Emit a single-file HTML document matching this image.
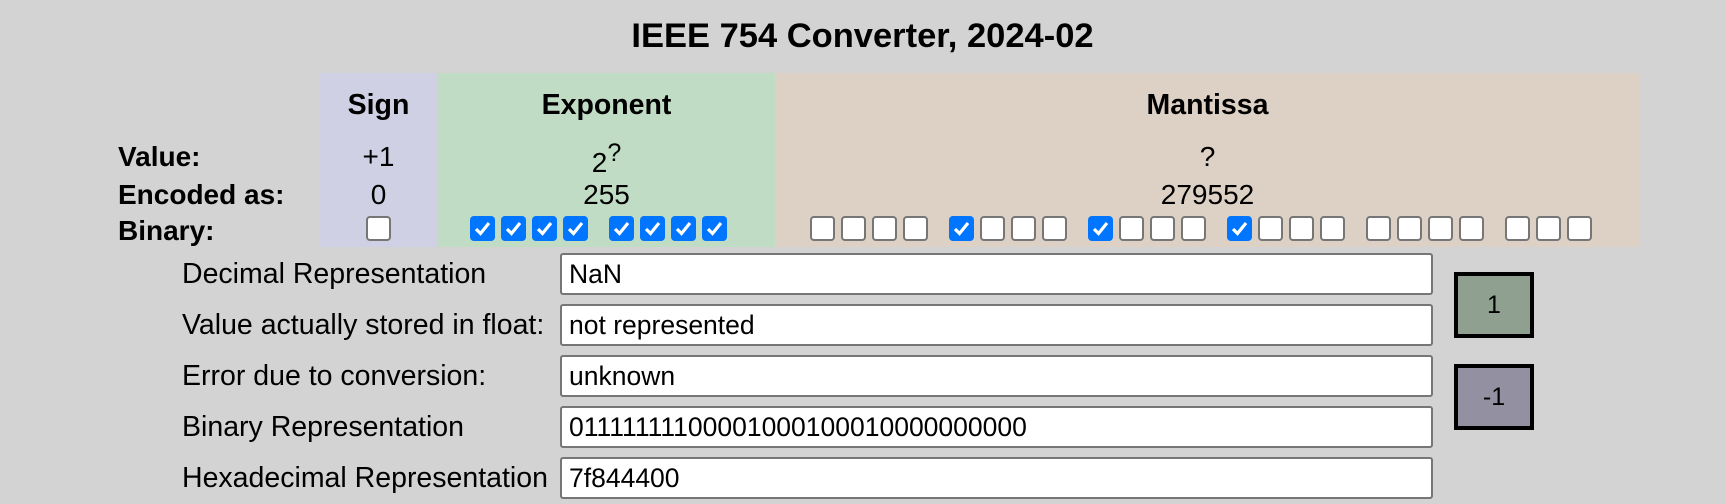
<!DOCTYPE html>
<html><head><meta charset="utf-8"><style>
body{margin:0;width:1725px;height:504px;background:#d3d3d3;font-family:"Liberation Sans",Arial,sans-serif;position:relative;overflow:hidden;color:#000}
.a{position:absolute}
.t{left:0;width:1725px;text-align:center;top:17px;font-size:34.5px;font-weight:bold}
.col{top:73px;height:174px}
.h{font-size:28.5px;font-weight:bold;text-align:center;width:100%;top:16px}
.c{font-size:28px;text-align:center;width:100%}
.rl{left:118px;font-size:28px;font-weight:bold}
.cb{width:21px;height:21px;border:2px solid #767676;border-radius:4px;background:#fff;top:216px}
.ck{width:25px;height:25px;border-radius:4px;background:#0075ff;top:216px}
.ck svg{position:absolute;left:3px;top:3px}
.lb{left:182px;font-size:28.5px}
.in{left:560px;border:2px solid #767676;border-radius:3px;background:#fff;font-size:26.5px;line-height:38px;padding-left:7px;box-sizing:border-box;width:873px;height:42px}
.bt{width:72px;height:58px;border:4px solid #000;text-align:center;line-height:58px;font-size:25px}
</style></head><body>
<div class="a t">IEEE 754 Converter, 2024-02</div>
<div class="a col" style="left:319px;width:119px;background:#d0d0e4">
<div class="a h">Sign</div><div class="a c" style="top:68px">+1</div><div class="a c" style="top:106px">0</div></div>
<div class="a col" style="left:438px;width:337px;background:#c0dcc4">
<div class="a h">Exponent</div><div class="a c" style="top:66px">2<sup style="font-size:25px;vertical-align:11px">?</sup></div><div class="a c" style="top:106px">255</div></div>
<div class="a col" style="left:775px;width:865px;background:#ddd0c4">
<div class="a h">Mantissa</div><div class="a c" style="top:68px">?</div><div class="a c" style="top:106px">279552</div></div>
<div class="a rl" style="top:141px">Value:</div>
<div class="a rl" style="top:179px">Encoded as:</div>
<div class="a rl" style="top:215px">Binary:</div>
<div id="bx"></div>
<div class="a lb" style="top:258px">Decimal Representation</div>
<div class="a lb" style="top:309px">Value actually stored in float:</div>
<div class="a lb" style="top:360px">Error due to conversion:</div>
<div class="a lb" style="top:411px">Binary Representation</div>
<div class="a lb" style="top:462px">Hexadecimal Representation</div>
<div class="a in" style="top:253px">NaN</div>
<div class="a in" style="top:304px">not represented</div>
<div class="a in" style="top:355px">unknown</div>
<div class="a in" style="top:406px">01111111100001000100010000000000</div>
<div class="a in" style="top:457px">7f844400</div>
<div class="a bt" style="left:1454px;top:272px;background:#8fa091">1</div>
<div class="a bt" style="left:1454px;top:364px;background:#9391a1">-1</div>
<script>
var h='';var chk='<svg width="19" height="19" viewBox="0 0 19 19"><path d="M3 10 L7.5 14.5 L16 4" stroke="#fff" stroke-width="3.2" fill="none"/></svg>';
function box(x,c){h+=c?'<div class="a ck" style="left:'+x+'px">'+chk+'</div>':'<div class="a cb" style="left:'+x+'px"></div>';}
box(366,0);
var e=[470,501,532,563,609,640,671,702];e.forEach(function(x){box(x,1)});
var bits='00001000100010000000000';var i=0;
for(var g=0;g<6;g++){for(var k=0;k<(g<5?4:3);k++){box(810+g*139+k*31,bits[i]=='1');i++;}}
document.getElementById('bx').innerHTML=h;
</script>
</body></html>
